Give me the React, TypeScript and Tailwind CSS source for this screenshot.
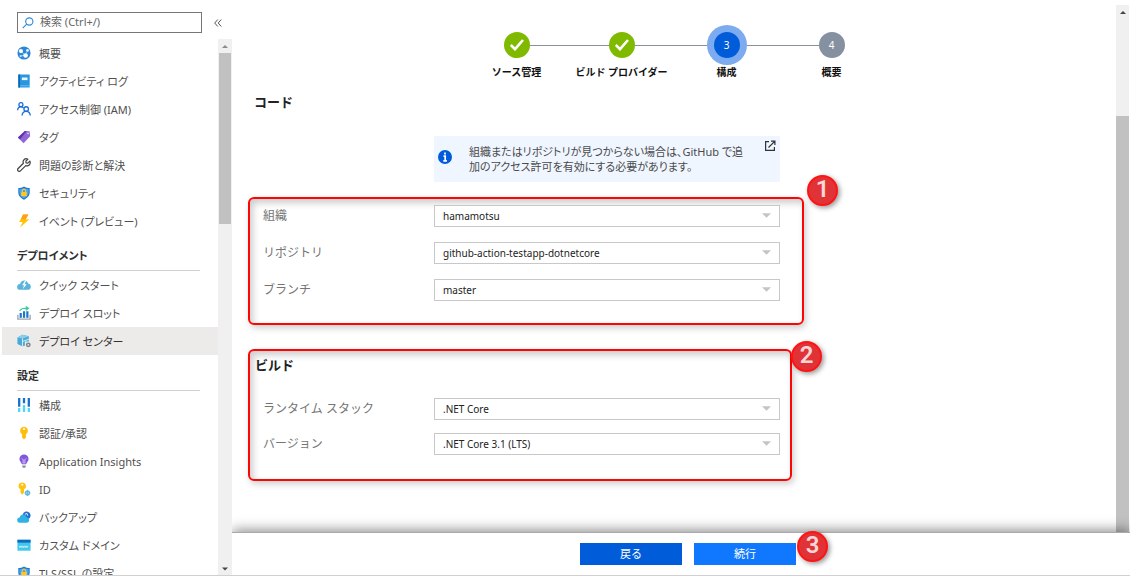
import { useState, type ReactNode } from "react";
import clsx from "clsx";

type NavItem = { label: string; icon: ReactNode };

const shield = (
  <>
    <path d="M8 0.5C10 2 12.500 2.300 14.500 2.400V7.500C14.500 11.500 11 14.300 8 15.800C5 14.300 1.500 11.500 1.500 7.500V2.400C3.500 2.300 6 2 8 .5Z" fill="#1378d6" />
    <path d="M8 2C9.700 3.200 11.600 3.500 13.300 3.600V7.500C13.300 10.700 10.500 13.200 8 14.400C5.500 13.200 2.700 10.700 2.700 7.500V3.600C4.400 3.500 6.300 3.200 8 2Z" fill="#4da3f0" />
    <rect x="4.800" y="6.800" width="6.400" height="4.900" rx=".6" fill="#ffc81a" />
    <path d="M6 7V5.600a2 2 0 0 1 4 0V7" fill="none" stroke="#ffc81a" strokeWidth="1.200" />
  </>
);

const GENERAL: NavItem[] = [
  {
    label: "概要",
    icon: (
      <>
        <circle cx="8" cy="8" r="7.500" fill="#2b86d6" />
        <path d="M3.500 4.500 9 10.500 12.500 5M9 10.500 4 11.500" stroke="#8fd0ff" strokeWidth="1" fill="none" />
        <circle cx="4.500" cy="5.800" r="2.400" fill="#fff" />
        <circle cx="12" cy="5" r="1.600" fill="#e4f3ff" />
        <circle cx="9.800" cy="10.800" r="2.600" fill="#fff" />
        <circle cx="4.200" cy="11.500" r="1.300" fill="#b4e0ff" />
      </>
    ),
  },
  {
    label: "アクティビティ ログ",
    icon: (
      <>
        <rect x="1.500" y=".5" width="13" height="15" rx="1" fill="#2a96e0" />
        <rect x="1.500" y=".5" width="2" height="15" fill="#0a68b4" />
        <rect x="5.500" y="4" width="6.500" height="3" fill="#e8f7ff" />
        <rect x="3.500" y="13" width="11" height="1" fill="#73c5f5" />
      </>
    ),
  },
  {
    label: "アクセス制御 (IAM)",
    icon: (
      <g fill="none" stroke="#1b6fd8" strokeWidth="1.500">
        <circle cx="4.500" cy="3" r="2.300" />
        <path d="M.7 9.500C.8 6.800 2.500 5.600 4.500 5.600c1.200 0 2.300.4 3 1.400" />
        <circle cx="10.500" cy="8" r="2.600" />
        <path d="M5.800 15.500c.2-3 2.200-4.700 4.700-4.700s4.500 1.700 4.700 4.700" />
      </g>
    ),
  },
  {
    label: "タグ",
    icon: (
      <>
        <path d="M1 8.500 9 1 14.500 1.500 15 7 7.500 15Z" fill="#8f68d6" />
        <path d="M1 8.500 9 1 11 1.200 3.500 10.800Z" fill="#6030ad" />
        <circle cx="12.600" cy="3.800" r="1" fill="#e5d8ff" />
      </>
    ),
  },
  {
    label: "問題の診断と解決",
    icon: (
      <path
        d="M14.600 3.600 12.300 5.800 10.400 5.500 10.100 3.600 12.400 1.400C10.900.6 9.100.8 8 2 6.900 3.100 6.700 4.700 7.300 6L1.300 12a1.800 1.800 0 0 0 2.600 2.700L10 8.700c1.300.6 2.900.4 4-.7 1.200-1.200 1.400-2.900.6-4.400Z"
        fill="none"
        stroke="#444"
        strokeWidth="1.400"
        strokeLinejoin="round"
      />
    ),
  },
  { label: "セキュリティ", icon: shield },
  {
    label: "イベント (プレビュー)",
    icon: (
      <>
        <path d="M7 .5H13L10 6H14L3.500 15.500 6.500 9H2.500Z" fill="#ffc400" />
        <path d="M7 .5H13L10 6H4.500Z" fill="#ff9d1c" />
      </>
    ),
  },
];

const DEPLOYMENT: NavItem[] = [
  {
    label: "クイック スタート",
    icon: (
      <>
        <path d="M3.500 13.500a3.300 3.300 0 0 1 0-6.600C4 4.300 6 2.800 8.300 2.800c2.200 0 3.800 1.400 4.300 3.500 2 .2 3.200 1.700 3.200 3.600 0 2-1.500 3.600-3.600 3.600Z" fill="#58b4dc" />
        <path d="M9 3 5.800 8.300H8L6.800 12.500 11 7.200H8.700L10.500 3Z" fill="#fff" />
      </>
    ),
  },
  {
    label: "デプロイ スロット",
    icon: (
      <>
        <path d="M1 10v5h14v-5" fill="none" stroke="#9aa4ad" strokeWidth="1.500" />
        <rect x="3" y="8" width="2.500" height="5.500" fill="#1d74c9" />
        <rect x="6.800" y="6" width="2.500" height="7.500" fill="#1d74c9" />
        <rect x="10.600" y="6" width="2.500" height="7.500" fill="#1d74c9" />
        <path d="M3 5.500C5 2.800 8 2.300 12 2.500M10 .5l3 2-3 2.200" fill="none" stroke="#3bcf9b" strokeWidth="1.500" />
      </>
    ),
  },
  {
    label: "デプロイ センター",
    icon: (
      <>
        <path d="M.5 4 6 .8 13.500 2.500V8.500H9V13.500L6 14 .5 11.500Z" fill="#4aa9d6" />
        <path d="M.5 4 6 .8 13.500 2.500 6.500 5Z" fill="#8bcdea" />
        <path d="M6.300 5V14M6.300 8.500 13.500 6" stroke="#e4f5fc" strokeWidth="1" />
        <circle cx="12.900" cy="12.400" r="1.900" fill="none" stroke="#7d8790" strokeWidth="1.800" />
      </>
    ),
  },
];

const SETTINGS: NavItem[] = [
  {
    label: "構成",
    icon: (
      <>
        <path d="M2.500 0v10M8 0v6M13.500 0v10" stroke="#1671cd" strokeWidth="2.600" />
        <path d="M2.500 11.500V16M8 8v8M13.500 11.500V16" stroke="#4fd8f5" strokeWidth="2.600" />
      </>
    ),
  },
  {
    label: "認証/承認",
    icon: (
      <>
        <path d="M8 .8a4.600 4.600 0 0 1 2.200 8.500V13L8 15.500 5.800 13V9.300A4.600 4.600 0 0 1 8 .8Z" fill="#ffbe0b" />
        <circle cx="8" cy="3.500" r="1.200" fill="#fff" />
      </>
    ),
  },
  {
    label: "Application Insights",
    icon: (
      <>
        <path d="M8 .5a5.200 5.200 0 0 1 5.200 5.200c0 2.700-2.400 3.600-2.700 6.100h-5C5.200 9.300 2.800 8.400 2.800 5.700A5.200 5.200 0 0 1 8 .5Z" fill="#8156d8" />
        <path d="M5.500 5 7 6.500V11M10.500 5 9 6.500V11" stroke="#e2d4ff" strokeWidth="1" fill="none" />
        <path d="M6 13h4v1.500L9 15.700H7L6 14.500Z" fill="#8c8c8c" />
      </>
    ),
  },
  {
    label: "ID",
    icon: (
      <>
        <path d="M6 .5a4.200 4.200 0 0 1 2 7.900V12L6 14.500 4 12V8.400A4.200 4.200 0 0 1 6 .5Z" fill="#ffc20e" />
        <circle cx="6" cy="3.200" r="1.200" fill="#fff" />
        <circle cx="12" cy="12.500" r="2.200" fill="#fff" stroke="#62b8d8" strokeWidth="1.600" />
        <path d="M12 9v7M8.500 12.500h7" stroke="#62b8d8" strokeWidth="1" />
      </>
    ),
  },
  {
    label: "バックアップ",
    icon: (
      <>
        <path d="M6.500 5.500C7 3 9 1.500 11.300 1.800c2.300.3 4.200 2.200 4.200 4.600 0 2.300-1.500 3.800-3.500 4.100Z" fill="#1c6fd0" />
        <path d="M3.300 14.500a3 3 0 0 1-.2-6C3.500 6.300 5 5 7 5c2.100 0 3.600 1.400 3.900 3.300 1.900.1 3.100 1.400 3.100 3.100 0 1.800-1.300 3.100-3.200 3.100Z" fill="#2fb1e4" />
        <path d="M9 4.800 11.500 4M11.500 4l.8 2.500" stroke="#fff" strokeWidth="1" />
      </>
    ),
  },
  {
    label: "カスタム ドメイン",
    icon: (
      <>
        <rect x=".5" y="2" width="15" height="12.500" fill="#42c6ea" />
        <rect x=".5" y="2" width="15" height="3.300" fill="#0f6cbd" />
        <path d="M2.500 9 3.500 11 4.500 9 5.500 11 6.500 9 7.500 11 8.500 9 9.500 11 10.500 9 11.500 11 12.500 9" fill="none" stroke="#d9f7ff" strokeWidth=".9" />
      </>
    ),
  },
  { label: "TLS/SSL の設定", icon: shield },
];

const STEPS = ["ソース管理", "ビルド プロバイダー", "構成", "概要"];
const CURRENT_STEP = 2;

function NavList({ items, selected, onSelect }: { items: NavItem[]; selected: string; onSelect: (label: string) => void }) {
  return (
    <ul>
      {items.map((item) => (
        <li key={item.label}>
          <button
            type="button"
            onClick={() => onSelect(item.label)}
            className={clsx(
              "ml-0.5 flex h-7 w-full items-center gap-2 pl-[15px] text-left text-[11px]",
              selected === item.label ? "bg-[#edebe9] text-[#333]" : "text-[#505050] hover:bg-[#f5f4f3]"
            )}
          >
            <svg viewBox="0 0 16 16" className="size-3.5 shrink-0" aria-hidden="true">
              {item.icon}
            </svg>
            <span className="pt-0.5 whitespace-nowrap">{item.label}</span>
          </button>
        </li>
      ))}
    </ul>
  );
}

function NavHeading({ children }: { children: ReactNode }) {
  return (
    <h3 className="mr-[18px] ml-[17px] flex h-9 items-center border-b border-[#d2d0ce] pt-2 text-[11px] font-semibold text-[#303030]">
      {children}
    </h3>
  );
}

function Arrow({ down, className }: { down?: boolean; className: string }) {
  return (
    <svg viewBox="0 0 8 4" className={className} aria-hidden="true">
      <path d={down ? "M0 0h8L4 4Z" : "M0 4h8L4 0Z"} fill="currentColor" />
    </svg>
  );
}

function Sidebar() {
  const [selected, setSelected] = useState("デプロイ センター");
  return (
    <aside className="flex w-[232px] shrink-0 flex-col [font-feature-settings:'palt']">
      <div className="flex items-center gap-3 pt-3 pb-1.5 pl-[17px]">
        <label className="flex h-[21px] w-[185px] items-center gap-1.5 border border-[#767676] px-1">
          <svg viewBox="0 0 12 12" className="size-3 shrink-0" fill="none" stroke="#2b88d8" strokeWidth="1.100" aria-hidden="true">
            <circle cx="7.300" cy="4.500" r="3.600" />
            <path d="M4.700 7.200.7 11.200" />
          </svg>
          <input
            type="search"
            aria-label="検索"
            placeholder="検索 (Ctrl+/)"
            className="w-full min-w-0 bg-transparent text-[11px] text-[#333] outline-none placeholder:text-[#666]"
          />
        </label>
        <button type="button" aria-label="折りたたむ" className="text-[#555]">
          <svg viewBox="0 0 8 8" className="size-2" fill="none" stroke="currentColor" strokeWidth="1">
            <path d="M3.800.5.700 4 3.800 7.500M7.300.5 4.200 4 7.300 7.500" />
          </svg>
        </button>
      </div>
      <div className="flex min-h-0 flex-1">
        <nav className="min-w-0 flex-1 overflow-hidden">
          <NavList items={GENERAL} selected={selected} onSelect={setSelected} />
          <NavHeading>デプロイメント</NavHeading>
          <NavList items={DEPLOYMENT} selected={selected} onSelect={setSelected} />
          <NavHeading>設定</NavHeading>
          <NavList items={SETTINGS} selected={selected} onSelect={setSelected} />
        </nav>
        <div className="flex w-3.5 flex-col items-center bg-[#f0f0f0] pb-1">
          <div className="flex h-3.5 items-center text-[#8a8a8a]">
            <Arrow className="h-[3px] w-1.5" />
          </div>
          <div className="h-[171px] w-3 bg-[#c1c1c1]" />
          <Arrow down className="mt-auto h-1 w-1.5 text-[#444]" />
        </div>
      </div>
    </aside>
  );
}

function Stepper() {
  return (
    <ol className="flex justify-center">
      {STEPS.map((label, i) => (
        <li key={label} className="flex w-[105px] flex-col items-center">
          <div className="flex h-10 w-full items-center">
            <span className={clsx("h-px flex-1", i > 0 && "bg-[#8590a0]")} />
            <span className={clsx("rounded-full", i === CURRENT_STEP && "bg-[#7dabf0] p-[7px]")}>
              <span
                className={clsx(
                  "flex size-[26px] items-center justify-center rounded-full text-[10px] text-white",
                  i < CURRENT_STEP && "bg-[#7fba00]",
                  i === CURRENT_STEP && "bg-[#015cda]",
                  i > CURRENT_STEP && "bg-[#8590a0]"
                )}
              >
                {i < CURRENT_STEP ? (
                  <svg viewBox="0 0 14 12" className="h-3 w-3.5" fill="none" stroke="#fff" strokeWidth="2.600" aria-hidden="true">
                    <path d="M.8 6 5 10.200 13 1" />
                  </svg>
                ) : (
                  i + 1
                )}
              </span>
            </span>
            <span className={clsx("h-px flex-1", i < STEPS.length - 1 && "bg-[#8590a0]")} />
          </div>
          <span className="text-[10px] leading-[15px] font-bold whitespace-nowrap text-[#111]">{label}</span>
        </li>
      ))}
    </ol>
  );
}

function Field({ id, label, value }: { id: string; label: string; value: string }) {
  return (
    <div className="flex items-center">
      <label htmlFor={id} className="w-[171px] shrink-0 text-xs text-[#757575]">
        {label}
      </label>
      <div className="relative flex-1">
        <select
          id={id}
          defaultValue={value}
          className="block h-[22px] w-full appearance-none border border-[#c8c8c8] bg-white pl-2 text-[10px] text-[#222]"
        >
          <option>{value}</option>
        </select>
        <Arrow down className="pointer-events-none absolute top-2 right-[9px] h-[5px] w-[9px] text-[#c4c4c4]" />
      </div>
    </div>
  );
}

function Badge({ n, className }: { n: number; className: string }) {
  return (
    <span
      className={clsx(
        "absolute flex size-[31px] items-center justify-center rounded-full border-2 border-[#ff1414] bg-[#e03338] pb-1 font-['Roboto','Liberation_Sans',sans-serif] text-2xl leading-none font-semibold text-[#fcd5d5] shadow-[2px_2px_5px_rgba(0,0,0,0.4)]",
        className
      )}
    >
      {n}
    </span>
  );
}

const FRAME =
  "relative rounded-md border-2 border-[#fb0505] pl-[13px] shadow-[2px_3px_7px_rgba(0,0,0,0.2),inset_3px_4px_7px_rgba(0,0,0,0.2)]";

export default function App() {
  return (
    <div className="flex h-screen overflow-hidden border-b border-[#d0d0d0] bg-white font-['Noto_Sans','Noto_Sans_CJK_JP',sans-serif]">
      <Sidebar />
      <div className="flex min-w-0 flex-1 flex-col">
        <div className="flex min-h-0 flex-1">
          <main className="min-w-0 flex-1 overflow-hidden pt-[25px]">
            <Stepper />
            <div className="ml-4 max-w-[556px]">
              <h2 className="mt-3 pl-1.5 text-[13px] leading-5 font-bold text-[#222]">コード</h2>
              <div className="mt-6 mr-6 ml-[186px] flex h-[46px] bg-[#eff6ff] pr-1 pl-1">
                <svg viewBox="0 0 14 14" className="mt-3.5 size-3.5 shrink-0" aria-hidden="true">
                  <circle cx="7" cy="7" r="7" fill="#015cda" />
                  <path d="M7 2.600v1.900M5.500 6.200h1.700v4.600M5.300 10.900h3.600" stroke="#fff" strokeWidth="1.700" fill="none" />
                </svg>
                <p className="flex-1 self-center pr-4 pl-[17px] text-[11px] leading-[15px] text-[#4a4a4a] [font-feature-settings:'palt']">
                  組織またはリポジトリが見つからない場合は、GitHub で追加のアクセス許可を有効にする必要があります。
                </p>
                <a href="#github" aria-label="GitHub を開く" className="mt-1 size-3 shrink-0">
                  <svg viewBox="0 0 12 12" className="size-3" fill="none" stroke="#333" strokeWidth="1.200">
                    <path d="M5 1.600H1.600v8.800h8.800V7M7 1.200h3.900V5M10.700 1.300 4.500 7.500" />
                  </svg>
                </a>
              </div>

              <section className={clsx(FRAME, "mt-[15px] flex flex-col gap-[15px] pt-1.5 pr-[22px] pb-[22px]")}>
                <Field id="org" label="組織" value="hamamotsu" />
                <Field id="repo" label="リポジトリ" value="github-action-testapp-dotnetcore" />
                <Field id="branch" label="ブランチ" value="master" />
                <Badge n={1} className="-top-6 -right-9" />
              </section>

              <section className={clsx(FRAME, "mt-6 mr-3 flex flex-col gap-[13px] pr-2.5 pb-6")}>
                <h2 className="mt-1 mb-2.5 -ml-2 text-[13px] leading-5 font-bold text-[#222]">ビルド</h2>
                <Field id="stack" label="ランタイム スタック" value=".NET Core" />
                <Field id="version" label="バージョン" value=".NET Core 3.1 (LTS)" />
                <Badge n={2} className="-top-2.5 -right-8" />
              </section>
            </div>
          </main>
          <div className="mt-[5px] mr-px flex w-[13px] flex-col items-center bg-[#f0f0f0]">
            <div className="flex h-3.5 items-center text-[#444]">
              <Arrow className="h-[3px] w-1.5" />
            </div>
            <div className="mt-[97px] w-full flex-1 bg-[#c1c1c1]" />
          </div>
        </div>
        <footer className="relative flex h-[43px] items-center justify-center gap-3 border-t border-[#aaa] bg-white pl-3.5 text-[11px] text-white shadow-[0_-2px_12px_rgba(0,0,0,0.45)] [clip-path:inset(-24px_0_0_0)]">
          <button type="button" className="h-[22px] w-[102px] bg-[#015cda]">
            戻る
          </button>
          <div className="relative">
            <button type="button" className="block h-[22px] w-[102px] bg-[#1078ff]">
              続行
            </button>
            <Badge n={3} className="-top-3 -right-8" />
          </div>
        </footer>
      </div>
    </div>
  );
}
